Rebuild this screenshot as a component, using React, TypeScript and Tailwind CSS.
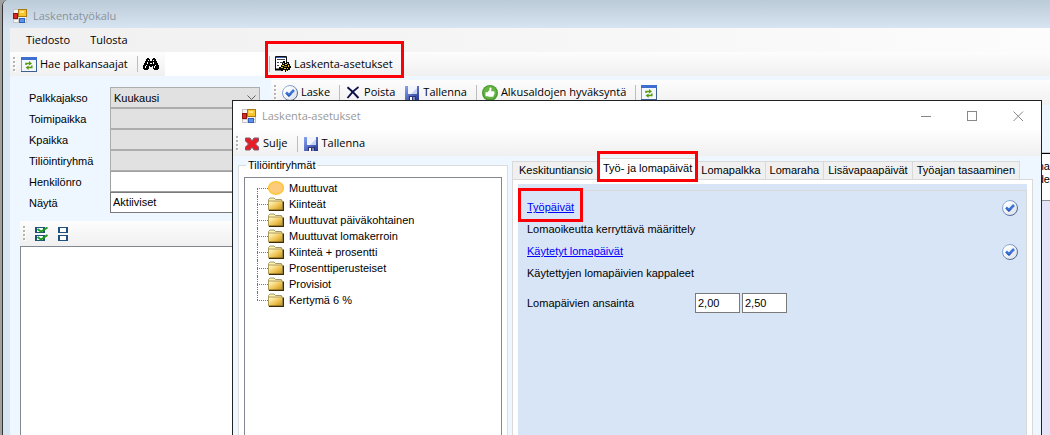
import type { ReactNode } from "react";

const TREE = [
  "Muuttuvat",
  "Kiinteät",
  "Muuttuvat päiväkohtainen",
  "Muuttuvat lomakerroin",
  "Kiinteä + prosentti",
  "Prosenttiperusteiset",
  "Provisiot",
  "Kertymä 6 %",
];

function AppIcon() {
  return (
    <svg width="14" height="14" viewBox="0 0 14 14" className="shrink-0" aria-hidden="true">
      <rect x="0.5" y="0.5" width="13" height="13" fill="#f6f6f6" stroke="#c4c4c4" />
      <path d="M5.5 1v12M1 10.5h12" stroke="#d0d0d0" />
      <rect x="0.5" y="4.5" width="4" height="5" fill="#d42a20" stroke="#8e1610" />
      <rect x="5.5" y="0.5" width="8" height="7" fill="#fbc52c" stroke="#a87a10" />
      <path d="M7 2h4v2H7z" fill="#ffe48a" />
      <rect x="6.500" y="9.500" width="5" height="4" fill="#5c92ea" stroke="#3060b8" />
    </svg>
  );
}

function RefreshIcon() {
  return (
    <svg width="16" height="15" viewBox="0 0 16 15" className="shrink-0" aria-hidden="true">
      <rect x="0.5" y="0.5" width="15" height="14" fill="#f3f8ff" stroke="#7f9cc8" />
      <rect x="0" y="0" width="16" height="3" fill="#3c6fd0" />
      <path d="M15.500 3v12M0 14.500h16" stroke="#3f5f92" />
      <path d="M5 8V6.500h4" fill="none" stroke="#5a9a08" strokeWidth="1.5" />
      <path d="M8 4 11 6.500 8 8.500z" fill="#5a9a08" />
      <path d="M10.800 8.500v2H7" fill="none" stroke="#5a9a08" strokeWidth="1.5" />
      <path d="M7.600 8.500 4.600 10.600 7.600 13z" fill="#5a9a08" />
    </svg>
  );
}

function BinocularsIcon() {
  return (
    <svg width="16" height="12" viewBox="0 0 16 12" className="shrink-0" aria-hidden="true">
      <path
        d="M4 0h2v1h1v2h2V1h1V0h2v1h1v2h1v2h1v2h1v4h-1v1h-4v-1h-1V8H9v1H7V8H6v3H5v1H1v-1H0V7h1V5h1V3h1V1h1z"
        fill="#000"
      />
      <path
        d="M5 2h1v1H5zM4 4h1v2H4zM3 7h1v1H3zM2 8h1v2H2zM10 2h1v1h-1zM10 4h1v2h-1zM12 7h1v1h-1zM11 8h1v2h-1zM7 5h2v1H7z"
        fill="#fff"
      />
    </svg>
  );
}

function SettingsIcon() {
  return (
    <svg width="16" height="16" viewBox="0 0 16 16" className="shrink-0" aria-hidden="true">
      <path d="M0.500 0.500h11v13H0.500z" fill="#fff" stroke="#111" />
      <path d="M1 1.500h10" stroke="#3a5cb0" />
      <path d="M2 3.500h8M2 6.500h2M5 6.500h3M2 9.500h2" stroke="#444" />
      <path d="M0 13.500h6" stroke="#000" strokeWidth="2" />
      <path
        d="M8 5h2v2h2V6h2v2h1v2h1v2h-1v2h-2v1h-2v1h-1v-2H8v1H6v-2H4v-2h2V9h1V7h1z"
        fill="#000"
      />
      <path d="M8 7h1v1H8zM7 9h2v1H7zM6 11h2v1H6zM10 8h2v1h-2zM12 7h1v1h-1zM13 9h1v2h-1zM9 12h2v1H9zM12 12h1v1h-1zM11 14h1v1h-1z" fill="#e8c820" />
      <path d="M9 10h3v1H9z" fill="#8a7a20" />
    </svg>
  );
}

function CheckCircle() {
  return (
    <svg width="16" height="16" viewBox="0 0 16 16" className="shrink-0" aria-hidden="true">
      <defs>
        <linearGradient id="ring" x1="0" y1="0" x2="1" y2="1">
          <stop offset="0" stopColor="#9cc0ee" />
          <stop offset="1" stopColor="#3a5078" />
        </linearGradient>
        <linearGradient id="disc" x1="0" y1="0" x2="1" y2="1">
          <stop offset="0.2" stopColor="#ffffff" />
          <stop offset="1" stopColor="#d8dce4" />
        </linearGradient>
      </defs>
      <circle cx="8" cy="8" r="7.500" fill="url(#disc)" stroke="url(#ring)" />
      <path d="M4 7.500 7 10.200 12 5" fill="none" stroke="#3c74dc" strokeWidth="2.600" />
      <path d="M4.500 9 7 11.300 9 9.300" fill="none" stroke="#1f4cae" strokeWidth="1" />
    </svg>
  );
}

function NavyCross() {
  return (
    <svg width="14" height="13" viewBox="0 0 14 13" className="shrink-0" aria-hidden="true">
      <path d="M1.500 1.200 C5 4 9 8 12.500 12" fill="none" stroke="#0c1048" strokeWidth="2" />
      <path d="M12.500 1 C8 4 4 8.500 1.500 12" fill="none" stroke="#0c1048" strokeWidth="1.800" />
    </svg>
  );
}

function RedCross() {
  return (
    <svg width="14" height="14" viewBox="0 0 14 14" className="shrink-0" aria-hidden="true">
      <path
        d="M0.500 1h4.500l2 3 2-3h4.500v3l-3 3 3 3v3H9l-2-3-2 3H0.500v-3l3-3-3-3z"
        fill="#e81c24"
        stroke="#7c5a70"
      />
    </svg>
  );
}

function DiskIcon() {
  return (
    <svg width="14" height="14" viewBox="0 0 14 14" className="shrink-0" aria-hidden="true">
      <defs>
        <linearGradient id="disk" x1="0" y1="0" x2="1" y2="1">
          <stop offset="0" stopColor="#8aa6f4" />
          <stop offset="1" stopColor="#26348f" />
        </linearGradient>
      </defs>
      <rect width="14" height="14" fill="url(#disk)" />
      <path d="M3 0h9v8H3z" fill="#f2f5fd" />
      <path d="M6 8h6V2z" fill="#c6d2f0" />
      <path d="M4 10h7v4H4z" fill="#2a3478" />
      <path d="M5 11h2v3H5z" fill="#fff" />
      <path d="M8 11h2v3H8z" fill="#7c86b4" />
    </svg>
  );
}

function ThumbIcon() {
  return (
    <svg width="16" height="16" viewBox="0 0 16 16" className="shrink-0" aria-hidden="true">
      <circle cx="8" cy="8" r="8" fill="#4a9a2e" />
      <circle cx="8" cy="7.500" r="6.600" fill="#66b444" />
      <path
        d="M3.500 7.200h2l2-2.200V3c0-1 2-.8 2 .8l-.4 2.400h2.600c1 0 1 1.200.5 1.500.5.400.4 1.200-.2 1.500.3.500.1 1.100-.5 1.300.1.700-.3 1.300-1 1.300H7l-1.300-.6H3.500z"
        fill="#fff"
      />
    </svg>
  );
}

function CheckAllIcon() {
  return (
    <svg width="14" height="14" viewBox="0 0 14 14" className="shrink-0" aria-hidden="true">
      <path d="M0 0h10v6H0zM0 8h10v6H0z" fill="#20507c" />
      <path d="M2 1h6v4H2zM2 9h6v4H2z" fill="#fff" />
      <path d="M2.500 2 6 4.500 12.500 0.500M2.500 10 6 12.500 12.500 8" fill="none" stroke="#1f9a20" strokeWidth="2" />
    </svg>
  );
}

function UncheckAllIcon() {
  return (
    <svg width="10" height="14" viewBox="0 0 10 14" className="shrink-0" aria-hidden="true">
      <path d="M0 0h10v6H0zM0 8h10v6H0z" fill="#20507c" />
      <path d="M2 1h6v4H2zM2 9h6v4H2z" fill="#fff" />
    </svg>
  );
}

function FolderIcon() {
  return (
    <svg width="16" height="14" viewBox="0 0 16 14" className="shrink-0" aria-hidden="true">
      <defs>
        <linearGradient id="folder" x1="0" y1="0" x2="1" y2="1">
          <stop offset="0.1" stopColor="#fff6c0" />
          <stop offset="0.6" stopColor="#eec04c" />
          <stop offset="1" stopColor="#c08a10" />
        </linearGradient>
      </defs>
      <path d="M0.500 12.500V2.500L2 1h4l1.500 1.500h6V4" fill="#fbf3b4" stroke="#a39c68" />
      <path d="M0.500 13V4h14v9z" fill="url(#folder)" stroke="#b09a58" />
      <path d="M1 13.400h14.400V4.500" fill="none" stroke="#3c2c08" strokeWidth="1.200" />
    </svg>
  );
}

function BallIcon() {
  return (
    <svg width="16" height="14" viewBox="0 0 16 14" className="shrink-0" aria-hidden="true">
      <ellipse cx="8" cy="7" rx="7.400" ry="6.200" fill="#fccb7c" stroke="#ffc83c" strokeWidth="1.600" />
    </svg>
  );
}

function Grip() {
  return (
    <svg width="3" height="15" viewBox="0 0 3 15" className="shrink-0" aria-hidden="true">
      <path d="M1 1h2v2H1zM1 5h2v2H1zM1 9h2v2H1zM1 13h2v2H1z" fill="#fff" />
      <path d="M0 0h2v2H0zM0 4h2v2H0zM0 8h2v2H0zM0 12h2v2H0z" fill="#b4b4b4" />
    </svg>
  );
}

function Sep() {
  return <span className="h-4 w-px shrink-0 bg-[#bdbdbd]" />;
}

function ToolButton({ icon, label, name }: { icon: ReactNode; label?: string; name?: string }) {
  return (
    <button type="button" aria-label={name} className="flex shrink-0 items-center gap-[3px] whitespace-nowrap text-black">
      <span className="flex w-4 justify-center">{icon}</span>
      {label && <span className="pr-1">{label}</span>}
    </button>
  );
}

const FIELDS = [
  { id: "jakso", label: "Palkkajakso", value: "Kuukausi", kind: "select" },
  { id: "toimi", label: "Toimipaikka", value: "", kind: "select" },
  { id: "kpaikka", label: "Kpaikka", value: "", kind: "select" },
  { id: "ryhma", label: "Tiliöintiryhmä", value: "", kind: "select" },
  { id: "henkilo", label: "Henkilönro", value: "", kind: "text" },
  { id: "nayta", label: "Näytä", value: "Aktiiviset", kind: "list" },
];

function FilterField({ id, label, value, kind }: (typeof FIELDS)[number]) {
  return (
    <div className="flex h-[21px] items-center">
      <label htmlFor={id} className="w-[81px] shrink-0 pt-px">
        {label}
      </label>
      {kind === "text" ? (
        <input id={id} defaultValue={value} className="h-full w-[150px] border border-[#a0a0a0] bg-white px-1 outline-none" />
      ) : (
        <span className="relative h-full w-[150px]">
          <select
            id={id}
            defaultValue={value}
            className={
              kind === "select"
                ? "h-full w-full appearance-none border border-[#adadad] bg-[#e1e1e1] px-[3px] pt-px outline-none"
                : "h-full w-full appearance-none border border-[#7a7a7a] bg-white px-[2px] outline-none"
            }
          >
            <option>{value}</option>
          </select>
          <svg width="9" height="6" viewBox="0 0 9 6" className="pointer-events-none absolute top-2 right-1" aria-hidden="true">
            <path d="M0.500 0.500l4 4 4-4" fill="none" stroke="#606060" />
          </svg>
        </span>
      )}
    </div>
  );
}

function MainWindow() {
  return (
    <div className="flex min-h-screen flex-col">
      <div className="flex h-7 items-center gap-[6px] bg-linear-to-b from-[#bccbd8] to-[#d7e4f1] pt-1 pl-[10px] text-[#8b9299]">
        <AppIcon />
        Laskentatyökalu
      </div>
      <div className="ml-[7px] flex grow flex-col bg-[#eef7ff]">
        <nav className="flex h-6 items-center gap-5 bg-linear-to-r from-[#f0f0f0] to-[#fcfcfc] pl-4">
          <button type="button">Tiedosto</button>
          <button type="button">Tulosta</button>
        </nav>
        <div className="flex h-6 bg-white">
          <div className="flex w-[155px] items-center gap-[5px] bg-linear-to-b from-[#fdfdfd] to-[#f0f0f0] pl-[3px]">
            <Grip />
            <ToolButton icon={<RefreshIcon />} label="Hae palkansaajat" />
            <Sep />
            <ToolButton icon={<BinocularsIcon />} name="Etsi" />
          </div>
          <div className="ml-[103px] flex grow items-center gap-[5px] bg-linear-to-b from-[#fdfdfd] to-[#f0f0f0] pl-[1px]">
            <Sep />
            <ToolButton icon={<SettingsIcon />} label="Laskenta-asetukset" />
          </div>
        </div>
        <div className="flex grow">
          <div className="flex w-[261px] shrink-0 flex-col pt-[11px] pl-[10px] font-['Liberation_Sans',sans-serif] text-[11px]">
            <div className="flex flex-col pl-[9px]">
              {FIELDS.map((f) => (
                <FilterField key={f.id} {...f} />
              ))}
            </div>
            <div className="mt-2 flex h-[25px] items-center gap-[9px] bg-linear-to-b from-[#fdfdfd] to-[#f0f0f0] pl-[3px]">
              <Grip />
              <button type="button" aria-label="Valitse kaikki">
                <CheckAllIcon />
              </button>
              <button type="button" aria-label="Poista valinnat">
                <UncheckAllIcon />
              </button>
            </div>
            <div className="grow border border-b-0 border-[#828790] bg-white" />
          </div>
          <div className="mt-1 flex h-[25px] grow items-center gap-[5px] bg-linear-to-b from-[#fdfdfd] to-[#f0f0f0] pl-[3px]">
            <Grip />
            <ToolButton icon={<CheckCircle />} label="Laske" />
            <Sep />
            <ToolButton icon={<NavyCross />} label="Poista" />
            <ToolButton icon={<DiskIcon />} label="Tallenna" />
            <Sep />
            <ToolButton icon={<ThumbIcon />} label="Alkusaldojen hyväksyntä" />
            <Sep />
            <ToolButton icon={<RefreshIcon />} name="Päivitä" />
          </div>
        </div>
      </div>
    </div>
  );
}

function SidePane() {
  return (
    <div className="absolute top-[152px] right-0 bottom-0 flex w-[14px] flex-col overflow-hidden border-t border-[#c8ccd0] bg-[#e4e3f8] font-['Liberation_Sans',sans-serif] text-[11px]">
      <div className="flex h-[48px] flex-col border-t border-b border-t-black border-b-[#909090] bg-white pt-[6px] leading-[13px]">
        <span className="self-end">na</span>
        <span className="self-end">de</span>
      </div>
    </div>
  );
}

function Tab({ label, active }: { label: string; active?: boolean }) {
  return (
    <button
      type="button"
      role="tab"
      aria-selected={!!active}
      className={
        active
          ? "relative h-[21px] border border-b-0 border-[#d9d9d9] bg-white px-1 pb-px whitespace-nowrap"
          : "h-[18px] border border-b-0 border-l-0 border-[#d9d9d9] bg-[#f0f0f0] px-1 whitespace-nowrap first:border-l first:pl-[6px]"
      }
    >
      {label}
      {active && <span className="absolute -inset-x-[2px] -top-[8px] -bottom-[3px] border-[3px] border-[#fb0007]" />}
    </button>
  );
}

function Dialog() {
  return (
    <section
      aria-label="Laskenta-asetukset"
      className="absolute top-[100px] right-2 bottom-0 left-[232px] flex flex-col border border-b-0 border-[#222] bg-[#eef7ff]"
    >
      <header className="flex h-[30px] shrink-0 items-center gap-[6px] bg-white pl-[9px] text-[#999]">
        <AppIcon />
        <span className="grow">Laskenta-asetukset</span>
        <div className="flex items-center gap-[35px] pr-[17px]">
          <button type="button" aria-label="Pienennä">
            <svg width="11" height="11" viewBox="0 0 11 11">
              <path d="M0 5.500h10" stroke="#888" />
            </svg>
          </button>
          <button type="button" aria-label="Suurenna">
            <svg width="11" height="11" viewBox="0 0 11 11">
              <rect x="0.500" y="0.500" width="9" height="9" fill="none" stroke="#888" />
            </svg>
          </button>
          <button type="button" aria-label="Sulje ikkuna">
            <svg width="11" height="11" viewBox="0 0 11 11">
              <path d="M0.500 0.500l9.500 9.500M10 0.500l-9.500 9.500" stroke="#888" />
            </svg>
          </button>
        </div>
      </header>
      <div className="flex h-[25px] shrink-0 items-center gap-[5px] bg-linear-to-b from-[#fdfdfd] to-[#f0f0f0] pl-[3px]">
        <Grip />
        <ToolButton icon={<RedCross />} label="Sulje" />
        <Sep />
        <ToolButton icon={<DiskIcon />} label="Tallenna" />
      </div>
      <div className="flex grow gap-1 pl-[5px] font-['Liberation_Sans',sans-serif] text-[11px]">
        <fieldset className="mt-[3px] flex w-[270px] shrink-0 flex-col border border-b-0 border-[#dcdcdc] bg-white px-[5px]">
          <legend className="ml-[2px] px-[2px] leading-[13px]">Tiliöintiryhmät</legend>
          <ul className="mt-[5px] grow border border-b-0 border-[#828790] bg-white pt-[2px] pl-[12px]">
            {TREE.map((t, i) => (
              <li key={t} className="flex h-4 items-center">
                <span className="flex h-full w-[11px] shrink-0 flex-col">
                  <span className={i === 0 ? "h-2" : "h-2 border-l border-dotted border-[#777]"} />
                  <span
                    className={
                      i === TREE.length - 1
                        ? "h-2 border-t border-dotted border-[#777]"
                        : "h-2 border-t border-l border-dotted border-[#777]"
                    }
                  />
                </span>
                {i === 0 ? <BallIcon /> : <FolderIcon />}
                <span className="pl-[5px] whitespace-nowrap">{t}</span>
              </li>
            ))}
          </ul>
        </fieldset>
        <div className="flex min-w-0 grow flex-col pr-2">
          <div role="tablist" className="flex h-[23px] shrink-0 items-end">
            <Tab label="Keskituntiansio" />
            <Tab label="Työ- ja lomapäivät" active />
            <Tab label="Lomapalkka" />
            <Tab label="Lomaraha" />
            <Tab label="Lisävapaapäivät" />
            <Tab label="Työajan tasaaminen" />
          </div>
          <div className="flex grow flex-col border border-b-0 border-[#d9d9d9] bg-white px-[5px] pt-1">
            <div className="flex grow flex-col bg-[#d8e5f7] pt-[6px]">
              <div className="grow border-t border-r border-[#d9d9d9] pr-2 pl-[9px]">
                <div className="flex h-[33px] items-center justify-between">
                  <a href="#tyopaivat" className="relative text-[#0000ff] underline">
                    Työpäivät
                    <span className="absolute -inset-x-[9px] -top-[11px] -bottom-[6px] border-[3px] border-[#fb0007]" />
                  </a>
                  <CheckCircle />
                </div>
                <p className="flex h-[11px] items-center">Lomaoikeutta kerryttävä määrittely</p>
                <div className="flex h-[33px] items-center justify-between">
                  <a href="#kaytetyt" className="text-[#0000ff] underline">
                    Käytetyt lomapäivät
                  </a>
                  <CheckCircle />
                </div>
                <p className="flex h-[11px] items-center">Käytettyjen lomapäivien kappaleet</p>
                <div className="mt-[14px] flex h-5 items-center gap-[2px]">
                  <label htmlFor="ansainta" className="w-[166px]">
                    Lomapäivien ansainta
                  </label>
                  <input id="ansainta" defaultValue="2,00" className="h-5 w-[45px] border border-[#7a7a7a] bg-white px-[2px] outline-none" />
                  <input
                    aria-label="Lomapäivien ansainta, toinen arvo"
                    defaultValue="2,50"
                    className="h-5 w-[45px] border border-[#7a7a7a] bg-white px-[2px] outline-none"
                  />
                </div>
              </div>
            </div>
          </div>
        </div>
      </div>
    </section>
  );
}

export default function App() {
  return (
    <div className="relative min-h-screen overflow-hidden bg-[#a0a0a0] pl-[2px] font-['Open_Sans','Noto_Sans',sans-serif] text-[11px] text-black">
      <div className="overflow-hidden rounded-tl-md border-l border-[#333] bg-[#d7e4f1]">
        <MainWindow />
      </div>
      <SidePane />
      <Dialog />
      <span className="pointer-events-none absolute top-[41px] left-[265px] h-[37px] w-[139px] border-[3px] border-[#fb0007]" />
    </div>
  );
}
